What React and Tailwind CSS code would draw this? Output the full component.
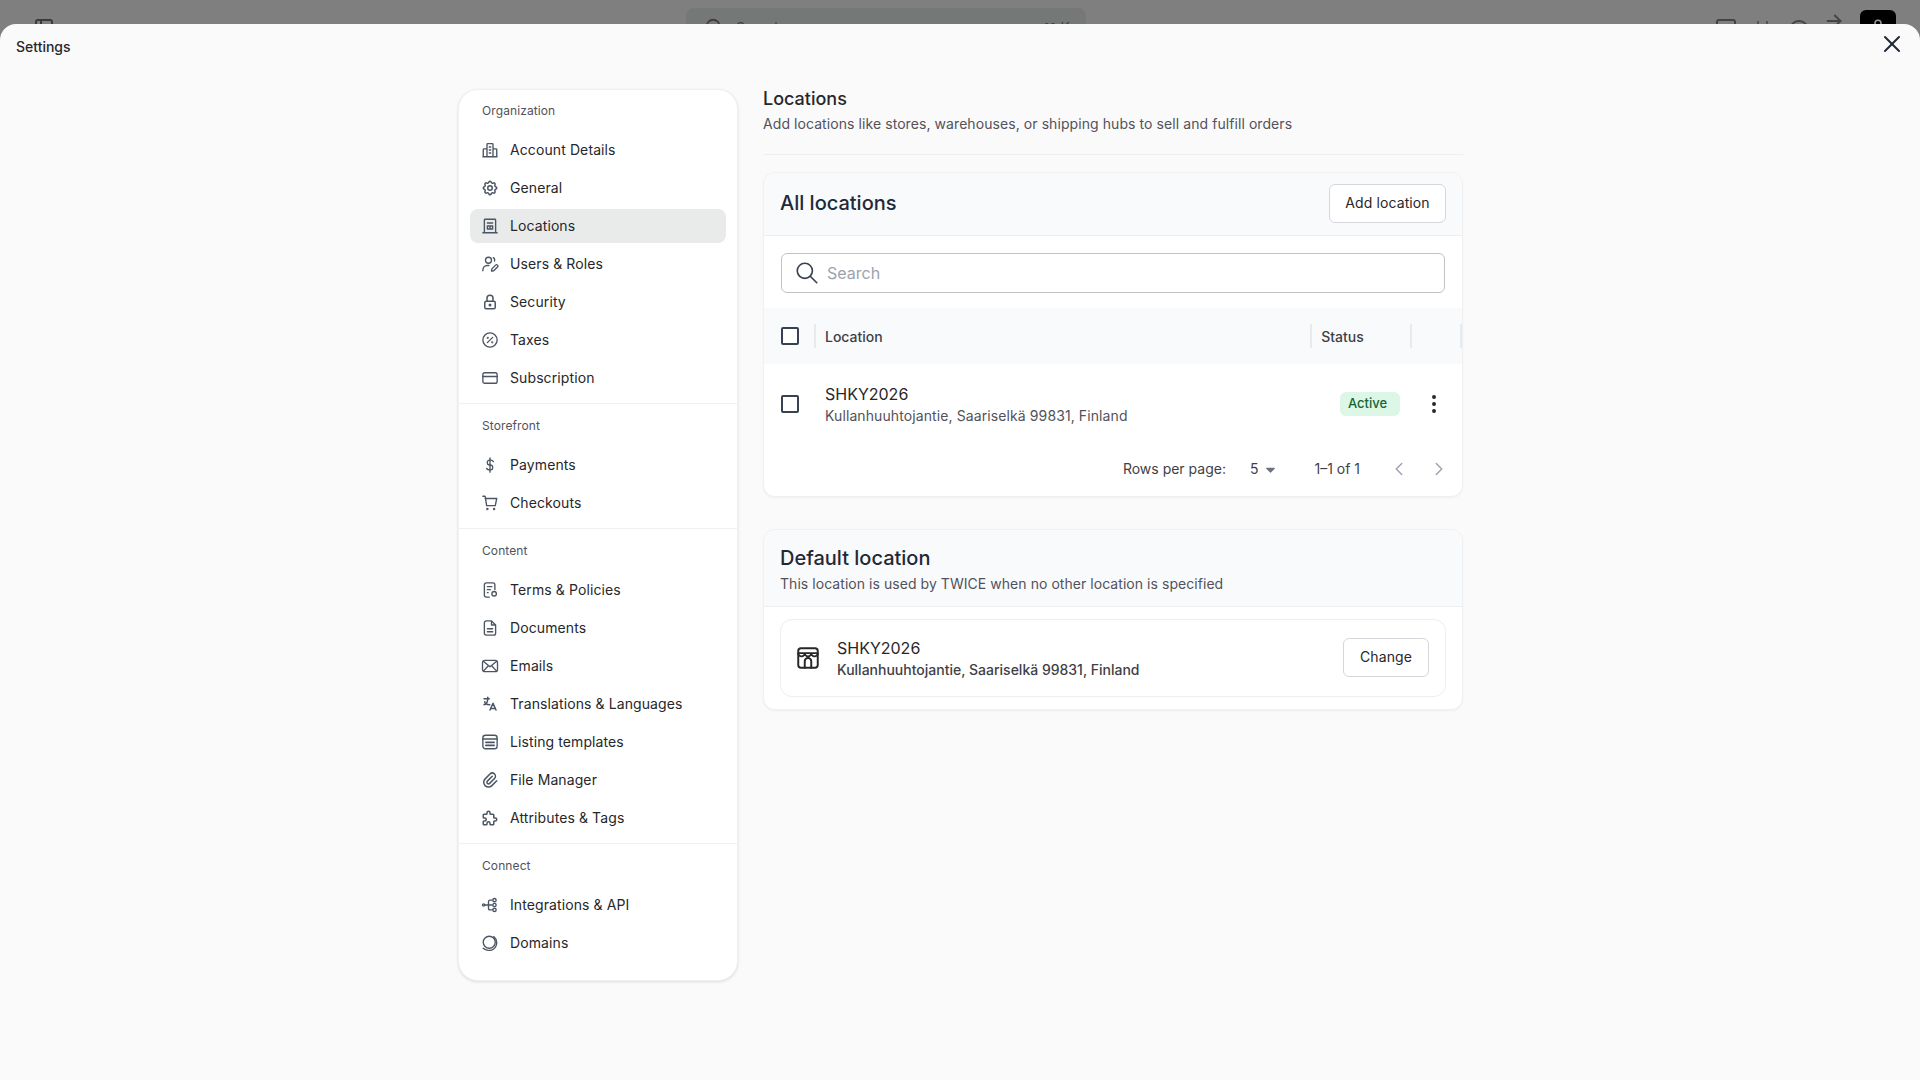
import React from "react";
import {
  TbSettings,
  TbLock,
  TbLanguage,
  TbPaperclip,
  TbPuzzle,
  TbSearch,
  TbX,
  TbDotsVertical,
  TbChevronLeft,
  TbChevronRight,
  TbCaretDownFilled,
  TbLayoutSidebar,
  TbUser,
  TbSquare,
  TbArrowRight,
  TbHelpCircle,
} from "react-icons/tb";

function Svg({ className, children }) {
  return (
    <svg viewBox="0 0 24 24" fill="none" stroke="currentColor" strokeWidth="1.8" strokeLinecap="round" strokeLinejoin="round" className={className}>
      {children}
    </svg>
  );
}

const BuildingsIcon = (p) => (
  <Svg {...p}>
    <path d="M2.5 21h19M8 21V4.5a1 1 0 0 1 1-1h6a1 1 0 0 1 1 1V21M8 10.5H4a1 1 0 0 0-1 1V21M16 10.5h4a1 1 0 0 1 1 1V21M11 8h2M11 12h2M11 16h2" />
  </Svg>
);
const OfficeIcon = (p) => (
  <Svg {...p}>
    <path d="M4.5 21V4a1 1 0 0 1 1-1h13a1 1 0 0 1 1 1v17M2.5 21h19M8.5 8h7M8.5 12h7M8.5 16h7M12 12v4M8.5 12v4M15.5 12v4" />
  </Svg>
);
const UserPenIcon = (p) => (
  <Svg {...p}>
    <circle cx="10" cy="7" r="4" />
    <path d="M2.5 21v-1a6 6 0 0 1 6-6h2M16.5 3.5a4 4 0 0 1 1.5 4.5M14 21.5l.5-3 5-5a1.6 1.6 0 0 1 2.5 2.5l-5 5z" />
  </Svg>
);
const PercentIcon = (p) => (
  <Svg {...p}>
    <circle cx="12" cy="12" r="9.5" />
    <path d="M15.5 8.5l-7 7" />
    <circle cx="9" cy="9" r=".6" />
    <circle cx="15" cy="15" r=".6" />
  </Svg>
);
const CardIcon = (p) => (
  <Svg {...p}>
    <rect x="2.5" y="5" width="19" height="14" rx="2.5" />
    <path d="M2.5 10h19" />
  </Svg>
);
const DollarIcon = (p) => (
  <Svg {...p}>
    <path d="M16.5 7.5a4 4 0 0 0-3.5-2h-2a3.3 3.3 0 0 0 0 6.5h2a3.3 3.3 0 0 1 0 6.5h-2a4 4 0 0 1-3.5-2M12 2.5v19" />
  </Svg>
);
const CartIcon = (p) => (
  <Svg {...p}>
    <path d="M2.5 3h2.2a1 1 0 0 1 1 .8L7.5 15.5h11.5l2-9.5H5.5" />
    <circle cx="8.5" cy="20" r=".7" />
    <circle cx="17.5" cy="20" r=".7" />
  </Svg>
);
const TermsIcon = (p) => (
  <Svg {...p}>
    <path d="M11 21.5H7a2.5 2.5 0 0 1-2.5-2.5V5A2.5 2.5 0 0 1 7 2.5h9A2.5 2.5 0 0 1 18.5 5v6.5M8.5 7.5h6M8.5 11.5h4M8.5 15.5h1" />
    <circle cx="17.5" cy="17" r="3" />
  </Svg>
);
const DocIcon = (p) => (
  <Svg {...p}>
    <path d="M14 2.5H7A2.5 2.5 0 0 0 4.5 5v14A2.5 2.5 0 0 0 7 21.5h10a2.5 2.5 0 0 0 2.5-2.5V8zM14 2.5V8h5.5M8.5 13h7M8.5 17h7" />
  </Svg>
);
const MailIcon = (p) => (
  <Svg {...p}>
    <rect x="2" y="4.5" width="20" height="15" rx="3" />
    <path d="M3.5 6l8.5 7 8.5-7M3.5 18.5l6-6.5M20.5 18.5l-6-6.5" />
  </Svg>
);
const ListIcon = (p) => (
  <Svg {...p}>
    <rect x="2.5" y="3" width="19" height="18" rx="3.5" />
    <path strokeWidth="2.2" d="M2.5 8h19M6.5 12.5h11M6.5 16.5h11" />
  </Svg>
);
const TreeIcon = (p) => (
  <Svg {...p}>
    <circle cx="3.5" cy="12" r="1.5" />
    <path d="M5 12h10M15 5.5h-3a2 2 0 0 0-2 2v9a2 2 0 0 0 2 2h3" />
    <circle cx="18" cy="5.5" r="2.2" />
    <circle cx="18" cy="12" r="2.2" />
    <circle cx="18" cy="18.5" r="2.2" />
  </Svg>
);
const GlobeIcon = (p) => (
  <Svg {...p}>
    <circle cx="11" cy="11" r="8" />
    <path d="M17 3.5c3.5 3 4.8 8 3 12.5-2 4.5-7 6.5-12 5.5-2-.4-3.7-1.3-5-2.5" />
  </Svg>
);
const StoreIcon = (p) => (
  <Svg {...p}>
    <rect x="3" y="3" width="18" height="18" rx="2.5" />
    <path d="M3 7.5a3 3 0 0 0 6 0 3 3 0 0 0 6 0 3 3 0 0 0 6 0M3 7.5h18M9 21v-6a3 3 0 0 1 6 0v6" />
  </Svg>
);

const SECTIONS = [
  {
    label: "Organization",
    items: [
      ["Account Details", BuildingsIcon],
      ["General", TbSettings],
      ["Locations", OfficeIcon, true],
      ["Users & Roles", UserPenIcon],
      ["Security", TbLock],
      ["Taxes", PercentIcon],
      ["Subscription", CardIcon],
    ],
  },
  {
    label: "Storefront",
    items: [
      ["Payments", DollarIcon],
      ["Checkouts", CartIcon],
    ],
  },
  {
    label: "Content",
    items: [
      ["Terms & Policies", TermsIcon],
      ["Documents", DocIcon],
      ["Emails", MailIcon],
      ["Translations & Languages", TbLanguage],
      ["Listing templates", ListIcon],
      ["File Manager", TbPaperclip],
      ["Attributes & Tags", TbPuzzle],
    ],
  },
  {
    label: "Connect",
    items: [
      ["Integrations & API", TreeIcon],
      ["Domains", GlobeIcon],
    ],
  },
];

function Sidebar() {
  return (
    <aside className="w-[280px] h-[892px] shrink-0 bg-white rounded-[20px] border border-[#f0f0f1] shadow-[0_1px_3px_rgba(0,0,0,0.12)]">
      {SECTIONS.map((s, i) => (
        <div key={s.label} className={i > 0 ? "border-t border-[#f1f1f2] pt-[12px] pb-[6px]" : "pt-[11px] pb-[6px]"}>
          <div className="h-[20px] pl-[23px] flex items-center text-xs tracking-[0.1px] text-[#52525b]">{s.label}</div>
          <div className="mt-[10px] px-[11px]">
            {s.items.map(([name, Icon, active]) => (
              <div key={name} className="h-[38px] py-[2px]">
                <div className={`h-[34px] flex items-center rounded-lg pl-[11px] ${active ? "bg-[#e9eaea]" : ""}`}>
                  <Icon className="w-[18px] h-[18px] text-[#4b5563] shrink-0" />
                  <span className="ml-[11px] text-sm tracking-[0.1px] text-[#27272a]">{name}</span>
                </div>
              </div>
            ))}
          </div>
        </div>
      ))}
    </aside>
  );
}

function Checkbox() {
  return <span className="block w-[18px] h-[18px] rounded-[2px] border-2 border-[#374151] bg-white" />;
}

function Sep() {
  return <span className="block w-[2px] h-[24px] bg-[#e9eaec]" />;
}

function AllLocations() {
  return (
    <section className="bg-white rounded-xl border border-[#f0f1f3] shadow-[0_1px_2px_rgba(0,0,0,0.05)]">
      <div className="h-[63px] px-[16px] pb-[2px] flex items-center justify-between bg-[#f9fafb] rounded-t-xl border-b border-[#eceef0]">
        <h2 className="text-xl font-medium text-[#1f2937]">All locations</h2>
        <button type="button" className="w-[117px] h-[39px] bg-white border border-[#d4d7dc] rounded-md text-sm tracking-[0.1px] text-[#27272a]">
          Add location
        </button>
      </div>
      <div className="px-[17px] pt-[17px]">
        <div className="h-[40px] flex items-center border border-[#c0c3c8] rounded-md pl-[12px]">
          <TbSearch className="w-[26px] h-[26px] text-[#374151]" strokeWidth={1.5} />
          <span className="ml-[7px] text-base text-[#9ca3af]">Search</span>
        </div>
      </div>
      <div className="mt-[15px] h-[56px] bg-[#f9fafb] flex items-center pl-[17px] text-sm font-medium text-[#3f3f46]">
        <Checkbox />
        <span className="ml-[15px]"><Sep /></span>
        <span className="ml-[9px] w-[486px] mt-[2px]">Location</span>
        <Sep />
        <span className="ml-[9px] w-[89px] mt-[2px]">Status</span>
        <Sep />
        <span className="ml-[48px]"><Sep /></span>
      </div>
      <div className="h-[80px] flex items-center pl-[17px]">
        <Checkbox />
        <div className="ml-[26px] w-[515px] mt-[2px]">
          <div className="text-base leading-[22px] text-[#27272a]">SHKY2026</div>
          <div className="text-sm leading-[22px] tracking-[0.1px] text-[#52525b]">Kullanhuuhtojantie, Saariselkä 99831, Finland</div>
        </div>
        <span className="w-[60px] h-[24px] rounded-md bg-[#dcf7e6] flex items-center pl-[8px] text-[13px] font-medium text-[#166534]">
          Active
        </span>
        <TbDotsVertical className="ml-[22px] w-[24px] h-[24px] text-[#27272a]" />
      </div>
      <div className="h-[52px] pb-[2px] flex items-center justify-end text-sm text-[#3f3f46]">
        <span>Rows per page:</span>
        <span className="ml-[24px]">5</span>
        <TbCaretDownFilled className="ml-[5px] w-[15px] h-[15px] text-[#6b7280]" />
        <span className="ml-[36px]">1–1 of 1</span>
        <TbChevronLeft className="ml-[28px] w-[22px] h-[22px] text-[#9ca3af]" strokeWidth={1.6} />
        <TbChevronRight className="ml-[18px] mr-[12px] w-[22px] h-[22px] text-[#9ca3af]" strokeWidth={1.6} />
      </div>
    </section>
  );
}

function DefaultLocation() {
  return (
    <section className="mt-[32px] bg-white rounded-xl border border-[#f0f1f3] shadow-[0_1px_2px_rgba(0,0,0,0.05)]">
      <div className="h-[77px] px-[16px] pt-[14px] bg-[#f9fafb] rounded-t-xl border-b border-[#eceef0]">
        <h2 className="text-xl leading-[28px] font-medium text-[#1f2937]">Default location</h2>
        <p className="text-sm leading-[24px] tracking-[0.05px] text-[#52525b]">This location is used by TWICE when no other location is specified</p>
      </div>
      <div className="px-[16px] pt-[12px] pb-[12px]">
        <div className="h-[78px] flex items-center border border-[#eceef0] rounded-xl pl-[14px] pr-[16px]">
          <StoreIcon className="w-[26px] h-[26px] text-[#27272a]" />
          <div className="ml-[16px] flex-1 mt-[2px]">
            <div className="text-base leading-[22px] text-[#27272a]">SHKY2026</div>
            <div className="text-sm leading-[22px] font-[450] text-[#3f3f46]">Kullanhuuhtojantie, Saariselkä 99831, Finland</div>
          </div>
          <button type="button" className="w-[86px] h-[39px] mt-[-2px] bg-white border border-[#d4d7dc] rounded-md text-sm tracking-[0.1px] text-[#27272a]">
            Change
          </button>
        </div>
      </div>
    </section>
  );
}

export default function App() {
  return (
    <div className="w-[1920px] h-[1080px] overflow-hidden bg-[#7f7f7f] relative" style={{ fontFamily: "Inter, sans-serif" }}>
      {/* page behind the modal, only its top edge shows */}
      <TbLayoutSidebar className="absolute left-[32px] top-[16px] w-[24px] h-[24px] text-[#3a3a3a]" />
      <div className="absolute left-[686px] top-[8px] w-[400px] h-[40px] rounded-lg bg-[#767878] flex items-center pl-[18px] text-sm text-[#3f3f3f]">
        <TbSearch className="w-[22px] h-[22px] mr-[10px]" />
        Search
        <span className="ml-auto mr-[16px]">⌘ K</span>
      </div>
      <TbSquare className="absolute left-[1714px] top-[17px] w-[24px] h-[24px] text-[#444]" />
      <div className="absolute left-[1757px] top-[21px] w-[11px] h-[4px] border-x-2 border-[#555]" />
      <TbHelpCircle className="absolute left-[1787px] top-[18px] w-[24px] h-[24px] text-[#444]" />
      <TbArrowRight className="absolute left-[1823px] top-[10px] w-[22px] h-[22px] text-[#444]" />
      <div className="absolute left-[1860px] top-[10px] w-[36px] h-[36px] rounded-md bg-black flex justify-center pt-[8px]">
        <TbUser className="w-[18px] h-[18px] text-[#999]" />
      </div>

      <div className="absolute inset-x-0 top-[24px] bottom-0 bg-[#fafafa] rounded-t-[16px]">
        <div className="h-[46px] pl-[16px] flex items-center text-sm font-medium text-[#27272a]">Settings</div>
        <TbX className="absolute right-[14px] top-[6px] w-[28px] h-[28px] text-[#1f2937]" strokeWidth={1.7} />
        <div className="mt-[19px] flex pl-[458px]">
          <Sidebar />
          <main className="ml-[25px] w-[700px]">
            <h1 className="mt-[-2px] text-lg leading-[24px] font-medium text-[#27272a]">Locations</h1>
            <p className="mt-[1px] text-sm leading-[24px] tracking-[0.075px] text-[#52525b]">Add locations like stores, warehouses, or shipping hubs to sell and fulfill orders</p>
            <div className="mt-[18px] mb-[17px] border-t border-[#eeeff1]" />
            <AllLocations />
            <DefaultLocation />
          </main>
        </div>
      </div>
    </div>
  );
}
